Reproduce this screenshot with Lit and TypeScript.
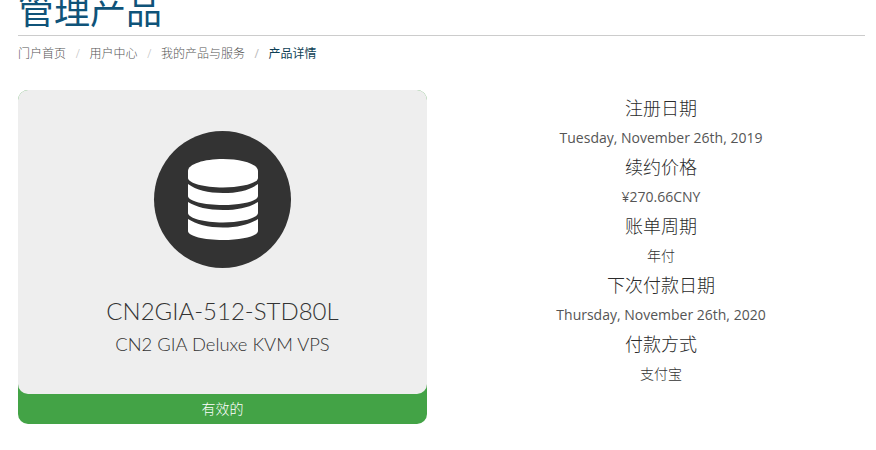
import { LitElement, html, css, TemplateResult } from 'lit';
import { customElement } from 'lit/decorators.js';

const crumbs = ['门户首页', '用户中心', '我的产品与服务'];

const details: [string, string][] = [
  ['注册日期', 'Tuesday, November 26th, 2019'],
  ['续约价格', '¥270.66CNY'],
  ['账单周期', '年付'],
  ['下次付款日期', 'Thursday, November 26th, 2020'],
  ['付款方式', '支付宝'],
];

const isLatin = (s: string) => /[A-Za-z]/.test(s);

@customElement('app-root')
export class AppRoot extends LitElement {
  static styles = css`
    :host {
      display: block;
      height: 450px;
      overflow: hidden;
      background: #fff;
      padding: 0 11px 0 18px;
      box-sizing: border-box;
      font-family: "Open Sans", "Noto Sans CJK SC", sans-serif;
      color: #333;
    }

    .title {
      margin: -13px 0 0;
      height: 48px;
      line-height: 48px;
      font-size: 36px;
      font-weight: 400;
      color: #0f5379;
      border-bottom: 1px solid #ccc;
    }

    .crumbs {
      display: flex;
      align-items: center;
      height: 18px;
      margin-top: 8px;
      font-size: 12px;
      font-weight: 300;
      color: #555;
    }

    .crumb + .crumb::before {
      content: '/';
      display: inline-block;
      width: 23.5px;
      text-align: center;
      color: #bbb;
    }

    .crumb.active {
      font-weight: 400;
      color: #0e3f55;
    }

    .main {
      display: grid;
      grid-template-columns: 409px 408px;
      column-gap: 30px;
      margin-top: 28px;
    }

    .card {
      height: 334px;
      border-radius: 10px;
      background: #43a346;
      display: flex;
      flex-direction: column;
      text-align: center;
    }

    .face {
      height: 304px;
      border-radius: 10px;
      background: #eeeeee;
      display: flex;
      flex-direction: column;
      align-items: center;
      padding-top: 41px;
      box-sizing: border-box;
    }

    .disc {
      width: 137px;
      height: 137px;
      border-radius: 50%;
      background: #333;
      display: flex;
      align-items: center;
      justify-content: center;
    }

    .disc svg {
      width: 70px;
      height: 81px;
      fill: #fff;
    }

    .name {
      margin-top: 26px;
      font-family: Lato, sans-serif;
      font-weight: 300;
      font-size: 24px;
      line-height: 34px;
      color: #333;
    }

    .group {
      margin-top: 3px;
      font-family: Lato, sans-serif;
      font-weight: 300;
      font-size: 18.4px;
      line-height: 26px;
      color: #333;
    }

    .status {
      height: 30px;
      line-height: 30px;
      font-size: 14px;
      font-weight: 300;
      color: #fff;
    }

    .details {
      padding-top: 3px;
      text-align: center;
    }

    .label {
      height: 30px;
      line-height: 30px;
      font-size: 18px;
      font-weight: 300;
      color: #2b2b2b;
    }

    .value {
      height: 29px;
      line-height: 29px;
      font-size: 14px;
      font-weight: 300;
      color: #333;
    }

    .value.latin {
      font-weight: 400;
      color: #555;
    }
  `;

  render(): TemplateResult {
    return html`
      <h1 class="title">管理产品</h1>
      <nav class="crumbs">
        ${crumbs.map((c) => html`<span class="crumb">${c}</span>`)}
        <span class="crumb active">产品详情</span>
      </nav>
      <section class="main">
        <div class="card">
          <div class="face">
            <div class="disc">
              <svg viewBox="0 0 70 81">
                <path d="M0 12C0 5 16 0 35 0S70 5 70 12V19C70 24 54 28.5 35 28.5S0 24 0 19Z" />
                <path d="M0 25C8 31 20 34 35 34S62 31 70 25V37C70 42 54 46 35 46S0 42 0 37Z" />
                <path d="M0 43C8 48 20 51 35 51S62 48 70 43V54C70 59 54 63.5 35 63.5S0 59 0 54Z" />
                <path d="M0 60C8 65 20 68.5 35 68.5S62 65 70 60V72C70 77 54 81 35 81S0 77 0 72Z" />
              </svg>
            </div>
            <div class="name">CN2GIA-512-STD80L</div>
            <div class="group">CN2 GIA Deluxe KVM VPS</div>
          </div>
          <div class="status">有效的</div>
        </div>
        <div class="details">
          ${details.map(
            ([label, value]) => html`
              <div class="label">${label}</div>
              <div class="value ${isLatin(value) ? 'latin' : ''}">${value}</div>
            `
          )}
        </div>
      </section>
    `;
  }
}

declare global {
  interface HTMLElementTagNameMap {
    'app-root': AppRoot;
  }
}
